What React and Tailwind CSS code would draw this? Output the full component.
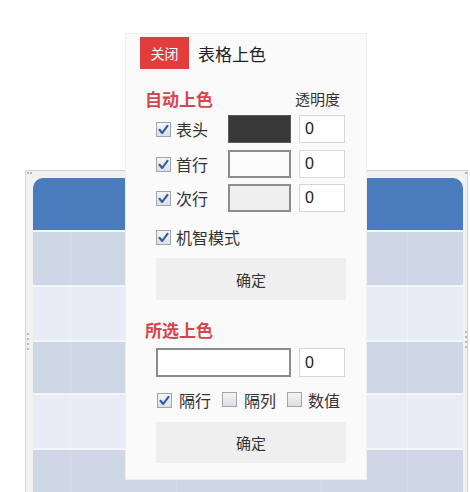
import React from "react";

function Check({ checked }) {
  return (
    <span className="inline-flex w-[15px] h-[15px] shrink-0 items-center justify-center border border-[#9ea6b2] bg-gradient-to-b from-[#f4f4f4] to-[#dedfe2]">
      {checked && (
        <svg width="13" height="13" viewBox="0 0 13 13">
          <path d="M2.5 6.8 L5.2 10 L10.5 2.8" fill="none" stroke="#2c5ba6" strokeWidth="2.1" strokeLinecap="round" strokeLinejoin="round" />
        </svg>
      )}
    </span>
  );
}

function ColorRow({ label, swatch, mt }) {
  return (
    <div className={`flex items-center h-[28px] ${mt}`}>
      <div className="ml-[30px] w-[20px]"><Check checked /></div>
      <span className="w-[52px] text-[16px] leading-none text-[#333]">{label}</span>
      <div className={`w-[63px] h-[28px] ${swatch}`} />
      <div className="ml-[8px] w-[46px] h-[28px] bg-white border border-[#d6d6d6] flex items-center pl-[5px] text-[16px] leading-none text-[#222] font-['Liberation_Sans',sans-serif]">0</div>
    </div>
  );
}

function TableRow({ dark, h }) {
  const line = dark ? "border-[#d6dde9]" : "border-[#eef1f7]";
  return (
    <div className={`grid grid-cols-[37px_106px_145px_86px_1fr] ${h} ${dark ? "bg-[#cfd7e6]" : "bg-[#e8edf5]"}`}>
      <div />
      <div className={`border-l ${line}`} />
      <div className={`border-l ${line}`} />
      <div className={`border-l ${line}`} />
      <div className={`border-l ${line}`} />
    </div>
  );
}

export default function App() {
  return (
    <div className="relative w-[470px] h-[492px] bg-white overflow-hidden font-['Noto_Sans_CJK_SC','Noto_Sans',sans-serif]">
      <div className="pt-[170px] pl-[25px]">
        <div className="relative w-[443px] h-[330px] bg-[#f1f1f1] border border-[#d2d2d2] pl-[7px] pt-[7px] pr-[4px]">
          <div className="flex flex-col gap-[2px] bg-[#f3f6fb]">
            <div className="h-[52px] bg-[#4a7bbd] rounded-t-[10px]" />
            <TableRow dark h="h-[53px]" />
            <TableRow h="h-[53px]" />
            <TableRow dark h="h-[51px]" />
            <TableRow h="h-[53px]" />
            <TableRow dark h="h-[60px]" />
          </div>
          <div className="absolute left-[1px] top-[1px] flex gap-[1px]">
            <span className="w-[2px] h-[2px] bg-[#b8b8b8]" />
            <span className="w-[2px] h-[2px] bg-[#b8b8b8]" />
          </div>
          <div className="absolute left-[1px] top-[162px] flex flex-col gap-[3px]">
            <span className="w-[2px] h-[2px] bg-[#b8b8b8]" />
            <span className="w-[2px] h-[2px] bg-[#b8b8b8]" />
            <span className="w-[2px] h-[2px] bg-[#b8b8b8]" />
            <span className="w-[2px] h-[2px] bg-[#b8b8b8]" />
          </div>
          <div className="absolute right-[0px] top-[160px] flex flex-col gap-[3px]">
            <span className="w-[2px] h-[2px] bg-[#b8b8b8]" />
            <span className="w-[2px] h-[2px] bg-[#b8b8b8]" />
            <span className="w-[2px] h-[2px] bg-[#b8b8b8]" />
            <span className="w-[2px] h-[2px] bg-[#b8b8b8]" />
          </div>
          <div className="absolute right-[0px] top-[1px] w-[2px] h-[2px] bg-[#b8b8b8]" />
        </div>
      </div>

      <div className="absolute left-[125px] top-[33px] w-[242px] h-[447px] bg-[#fafafa] border border-[#efefef]">
        <div className="flex items-center mt-[3px] ml-[14px]">
          <div className="w-[49px] h-[32px] bg-[#e23c3c] flex items-center justify-center text-white text-[14px] leading-none">关闭</div>
          <span className="ml-[9px] text-[17px] leading-none text-[#222]">表格上色</span>
        </div>

        <div className="flex items-center h-[24px] mt-[17px]">
          <span className="ml-[19px] text-[17px] font-bold leading-none text-[#d9434a]">自动上色</span>
          <span className="ml-[82px] text-[15px] leading-none text-[#333]">透明度</span>
        </div>

        <ColorRow label="表头" swatch="bg-[#383838] border border-[#5a5a5a]" mt="mt-[5px]" />
        <ColorRow label="首行" swatch="bg-[#fbfbfb] border-2 border-[#8c8c8c]" mt="mt-[7px]" />
        <ColorRow label="次行" swatch="bg-[#efefef] border-2 border-[#8c8c8c]" mt="mt-[6px]" />

        <div className="flex items-center h-[28px] mt-[11px]">
          <div className="ml-[30px] w-[20px]"><Check checked /></div>
          <span className="text-[16px] leading-none text-[#333]">机智模式</span>
        </div>

        <div className="ml-[30px] mt-[7px] w-[190px] h-[42px] bg-[#efefef] flex items-center justify-center text-[15px] leading-none text-[#333]">确定</div>

        <div className="flex items-center h-[24px] mt-[17px]">
          <span className="ml-[19px] text-[17px] font-bold leading-none text-[#d9434a]">所选上色</span>
        </div>

        <div className="flex items-center mt-[7px] h-[29px]">
          <div className="ml-[30px] w-[135px] h-[29px] bg-white border-2 border-[#8c8c8c]" />
          <div className="ml-[8px] w-[46px] h-[29px] bg-white border border-[#d6d6d6] flex items-center pl-[5px] text-[16px] leading-none text-[#222] font-['Liberation_Sans',sans-serif]">0</div>
        </div>

        <div className="flex items-center h-[20px] mt-[13px] text-[16px] leading-none text-[#333]">
          <div className="ml-[31px] w-[22px]"><Check checked /></div>
          <span className="w-[43px]">隔行</span>
          <div className="w-[22px]"><Check /></div>
          <span className="w-[43px]">隔列</span>
          <div className="w-[21px]"><Check /></div>
          <span>数值</span>
        </div>

        <div className="ml-[30px] mt-[12px] w-[190px] h-[41px] bg-[#efefef] flex items-center justify-center text-[15px] leading-none text-[#333]">确定</div>
      </div>
    </div>
  );
}
